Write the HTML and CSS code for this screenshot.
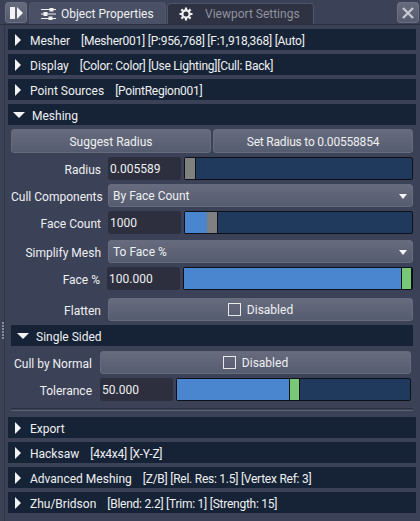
FILE: index.html
```html
<!DOCTYPE html>
<html lang="en">
<head>
    <meta charset="UTF-8">
    <title>Object Properties</title>
    <link rel="stylesheet" href="styles.css">
</head>
<body>
    <header class="tabbar">
        <button class="square-btn toggle-btn">
            <svg width="13" height="12" viewBox="0 0 13 12"><rect x="0" y="0" width="5" height="12" fill="#f2f2f2"/><path d="M7 0 L13 6 L7 12 Z" fill="#f2f2f2"/></svg>
        </button>
        <div class="tab tab-active">
            <svg class="tab-icon" width="15" height="12" viewBox="0 0 15 12" fill="none" stroke="#f0f0f0" stroke-width="1">
                <path d="M0 1.5H15M0 6H15M0 10.5H15"/>
                <rect x="9" y="0" width="3" height="3" fill="#f0f0f0"/>
                <rect x="3" y="4.5" width="3" height="3" fill="#f0f0f0"/>
                <rect x="8" y="9" width="3" height="3" fill="#f0f0f0"/>
            </svg>
            Object Properties
        </div>
        <div class="tab tab-off">
            <svg class="tab-icon" width="14" height="14" viewBox="0 0 14 14">
                <circle cx="7" cy="7" r="3.6" fill="none" stroke="#f0f0f0" stroke-width="2.2"/>
                <path d="M7 0.5V3M7 11V13.5M0.5 7H3M11 7H13.5M2.4 2.4L4.2 4.2M9.8 9.8L11.6 11.6M2.4 11.6L4.2 9.8M9.8 4.2L11.6 2.4" stroke="#f0f0f0" stroke-width="2.2"/>
            </svg>
            Viewport Settings
        </div>
        <button class="square-btn close-btn">
            <svg width="12" height="12" viewBox="0 0 12 12"><path d="M1 1L11 11M11 1L1 11" stroke="#c4c8d0" stroke-width="2.4"/></svg>
        </button>
    </header>

    <main class="panel">
        <span class="grip"></span>
        <div class="section-head"><span class="arrow-right"></span><span class="head-title">Mesher</span><span class="head-info">[Mesher001] [P:956,768] [F:1,918,368] [Auto]</span></div>
        <div class="section-head"><span class="arrow-right"></span><span class="head-title">Display</span><span class="head-info">[Color: Color] [Use Lighting][Cull: Back]</span></div>
        <div class="section-head"><span class="arrow-right"></span><span class="head-title">Point Sources</span><span class="head-info">[PointRegion001]</span></div>
        <div class="section-head"><span class="arrow-down"></span><span class="head-title">Meshing</span></div>

        <div class="section-body">
            <div class="btn-row">
                <button class="btn">Suggest Radius</button>
                <button class="btn btn-tight">Set Radius to 0.00558854</button>
            </div>

            <div class="row">
                <label class="row-label">Radius</label>
                <div class="num-input">0.005589</div>
                <div class="slider">
                    <span class="slider-fill" style="width: 0px"></span>
                    <span class="slider-grab"></span>
                </div>
            </div>
            <div class="row">
                <label class="row-label">Cull Components</label>
                <div class="dropdown">By Face Count<span class="drop-arrow"></span></div>
            </div>
            <div class="row">
                <label class="row-label">Face Count</label>
                <div class="num-input">1000</div>
                <div class="slider">
                    <span class="slider-fill" style="width: 22px"></span>
                    <span class="slider-grab"></span>
                </div>
            </div>
            <div class="row row-gap">
                <label class="row-label">Simplify Mesh</label>
                <div class="dropdown">To Face %<span class="drop-arrow"></span></div>
            </div>
            <div class="row">
                <label class="row-label">Face %</label>
                <div class="num-input">100.000</div>
                <div class="slider">
                    <span class="slider-fill" style="width: 217px"></span>
                    <span class="slider-grab grab-on"></span>
                </div>
            </div>
            <div class="row row-gap2">
                <label class="row-label">Flatten</label>
                <button class="toggle"><span class="checkbox"></span>Disabled</button>
            </div>

            <div class="section-head sub-head"><span class="arrow-down"></span><span class="head-title">Single Sided</span></div>
            <div class="sub-body">
                <div class="row">
                    <label class="row-label sub-label">Cull by Normal</label>
                    <button class="toggle"><span class="checkbox"></span>Disabled</button>
                </div>
                <div class="row">
                    <label class="row-label sub-label">Tolerance</label>
                    <div class="num-input">50.000</div>
                    <div class="slider">
                        <span class="slider-fill" style="width: 112px"></span>
                        <span class="slider-grab grab-on"></span>
                    </div>
                </div>
            </div>
            <div class="separator"></div>
        </div>

        <div class="section-head"><span class="arrow-right"></span><span class="head-title">Export</span></div>
        <div class="section-head"><span class="arrow-right"></span><span class="head-title">Hacksaw</span><span class="head-info">[4x4x4] [X-Y-Z]</span></div>
        <div class="section-head"><span class="arrow-right"></span><span class="head-title">Advanced Meshing</span><span class="head-info">[Z/B] [Rel. Res: 1.5] [Vertex Ref: 3]</span></div>
        <div class="section-head"><span class="arrow-right"></span><span class="head-title">Zhu/Bridson</span><span class="head-info">[Blend: 2.2] [Trim: 1] [Strength: 15]</span></div>
    </main>
</body>
</html>
```

FILE: styles.css
```css
/* Global Styles */
* {
    box-sizing: border-box;
}

body {
    margin: 0;
    width: 420px;
    height: 521px;
    overflow: hidden;
    background-color: #3b4157;
    color: #eef0f2;
    font-family: Roboto, sans-serif;
    font-size: 12px;
}

button {
    font-family: inherit;
    font-size: 12px;
    color: inherit;
    padding: 0;
}

/* Tab Bar */
.tabbar {
    display: flex;
    align-items: flex-end;
    height: 25px;
    padding-left: 5px;
    border-bottom: 1px solid #2b3042;
}

.square-btn {
    display: flex;
    align-items: center;
    justify-content: center;
    height: 21px;
    margin-bottom: 1px;
    background: linear-gradient(#666b7d, #565c70);
    border: 1px solid #6b7082;
    border-radius: 3px;
}

.toggle-btn {
    width: 22px;
}

.close-btn {
    width: 22px;
    margin-left: 83px;
}

.tab {
    display: flex;
    align-items: center;
    height: 22px;
    border: 1px solid #4f5568;
    border-bottom: none;
    border-radius: 4px 4px 0 0;
}

.tab-active {
    width: 137px;
    margin-left: 2px;
    padding-left: 11px;
    background-color: #4a5065;
}

.tab-off {
    width: 147px;
    margin-left: 1px;
    padding-left: 11px;
    height: 21px;
    background-color: #2f3243;
    color: #8f939e;
}

.tab-icon {
    margin-right: 5px;
}

.tab-off .tab-icon {
    margin-right: 12px;
}

/* Panel */
.panel {
    position: relative;
    margin-left: 4px;
    padding: 4px 4px 0 3px;
    height: 496px;
    border-left: 1px solid #2f3446;
}

.grip {
    position: absolute;
    left: -3px;
    top: 297px;
    width: 2px;
    height: 17px;
    background: repeating-linear-gradient(#8a8f9e 0 2px, transparent 2px 3px);
}

.section-head {
    display: flex;
    align-items: center;
    height: 21px;
    margin-bottom: 4px;
    padding-left: 6px;
    background-color: #162336;
    white-space: pre;
}

.head-title,
.head-info {
    padding-top: 2px;
}

.arrow-right {
    width: 0;
    height: 0;
    margin-left: 1px;
    margin-right: 9px;
    border-left: 6px solid #f4f4f4;
    border-top: 6px solid transparent;
    border-bottom: 6px solid transparent;
}

.arrow-down {
    width: 0;
    height: 0;
    margin-left: -1px;
    margin-right: 7px;
    border-top: 6px solid #f4f4f4;
    border-left: 6px solid transparent;
    border-right: 6px solid transparent;
}

.head-info {
    margin-left: 11px;
    letter-spacing: -0.25px;
}

.section-body {
    padding: 0 3px;
    margin-bottom: 6px;
}

/* Buttons */
.btn-row {
    display: flex;
    gap: 2px;
    margin-bottom: 4px;
}

.btn {
    flex: 1;
    height: 24px;
    padding-top: 2px;
    background: linear-gradient(#666b7d, #565c70);
    border: 1px solid #666c7e;
    border-radius: 3px;
}

.btn-tight {
    letter-spacing: -0.2px;
}

/* Property Rows */
.row {
    display: flex;
    align-items: center;
    height: 23px;
    margin-bottom: 4px;
}

.row-gap {
    margin-top: 6px;
}

.row-gap2 {
    margin-top: 8px;
}

.row-label {
    width: 90px;
    margin-right: 7px;
    padding-top: 2px;
    text-align: right;
    white-space: nowrap;
}

.sub-label {
    width: 81px;
    margin-right: 8px;
}

.num-input {
    width: 73px;
    height: 23px;
    margin-right: 3px;
    padding: 5px 2px;
    background-color: #2d2f3f;
    border-radius: 3px;
    flex-shrink: 0;
}

.slider {
    display: flex;
    flex: 1;
    height: 23px;
    background-color: #1f3a5c;
    border: 1px solid #0f1118;
    border-radius: 2px;
}

.slider-fill {
    background-color: #4a86d0;
}

.slider-grab {
    width: 11px;
    background-color: #808080;
    border-right: 1px solid #0f1118;
}

.grab-on {
    background-color: #78c878;
    border-left: 1px solid #0f1118;
}

.dropdown {
    position: relative;
    flex: 1;
    height: 23px;
    padding: 4px 4px;
    background: linear-gradient(#666b7d, #565c70);
    border: 1px solid #666c7e;
    border-radius: 3px;
}

.drop-arrow {
    position: absolute;
    right: 5px;
    top: 9px;
    width: 0;
    height: 0;
    border-top: 5px solid #f4f4f4;
    border-left: 4px solid transparent;
    border-right: 4px solid transparent;
}

.toggle {
    display: flex;
    align-items: center;
    justify-content: center;
    flex: 1;
    height: 23px;
    background: linear-gradient(#666b7d, #565c70);
    border: 1px solid #666c7e;
    border-radius: 3px;
}

.checkbox {
    width: 13px;
    height: 13px;
    margin-right: 6px;
    border: 1px solid #e8e8e8;
}

/* Single Sided */
.sub-head {
    margin-bottom: 5px;
    padding-left: 7px;
}

.sub-body {
    padding-right: 2px;
}

.separator {
    height: 3px;
    margin-top: 7px;
    border-top: 1px solid #2b3042;
    border-bottom: 1px solid #5a6073;
}
```
